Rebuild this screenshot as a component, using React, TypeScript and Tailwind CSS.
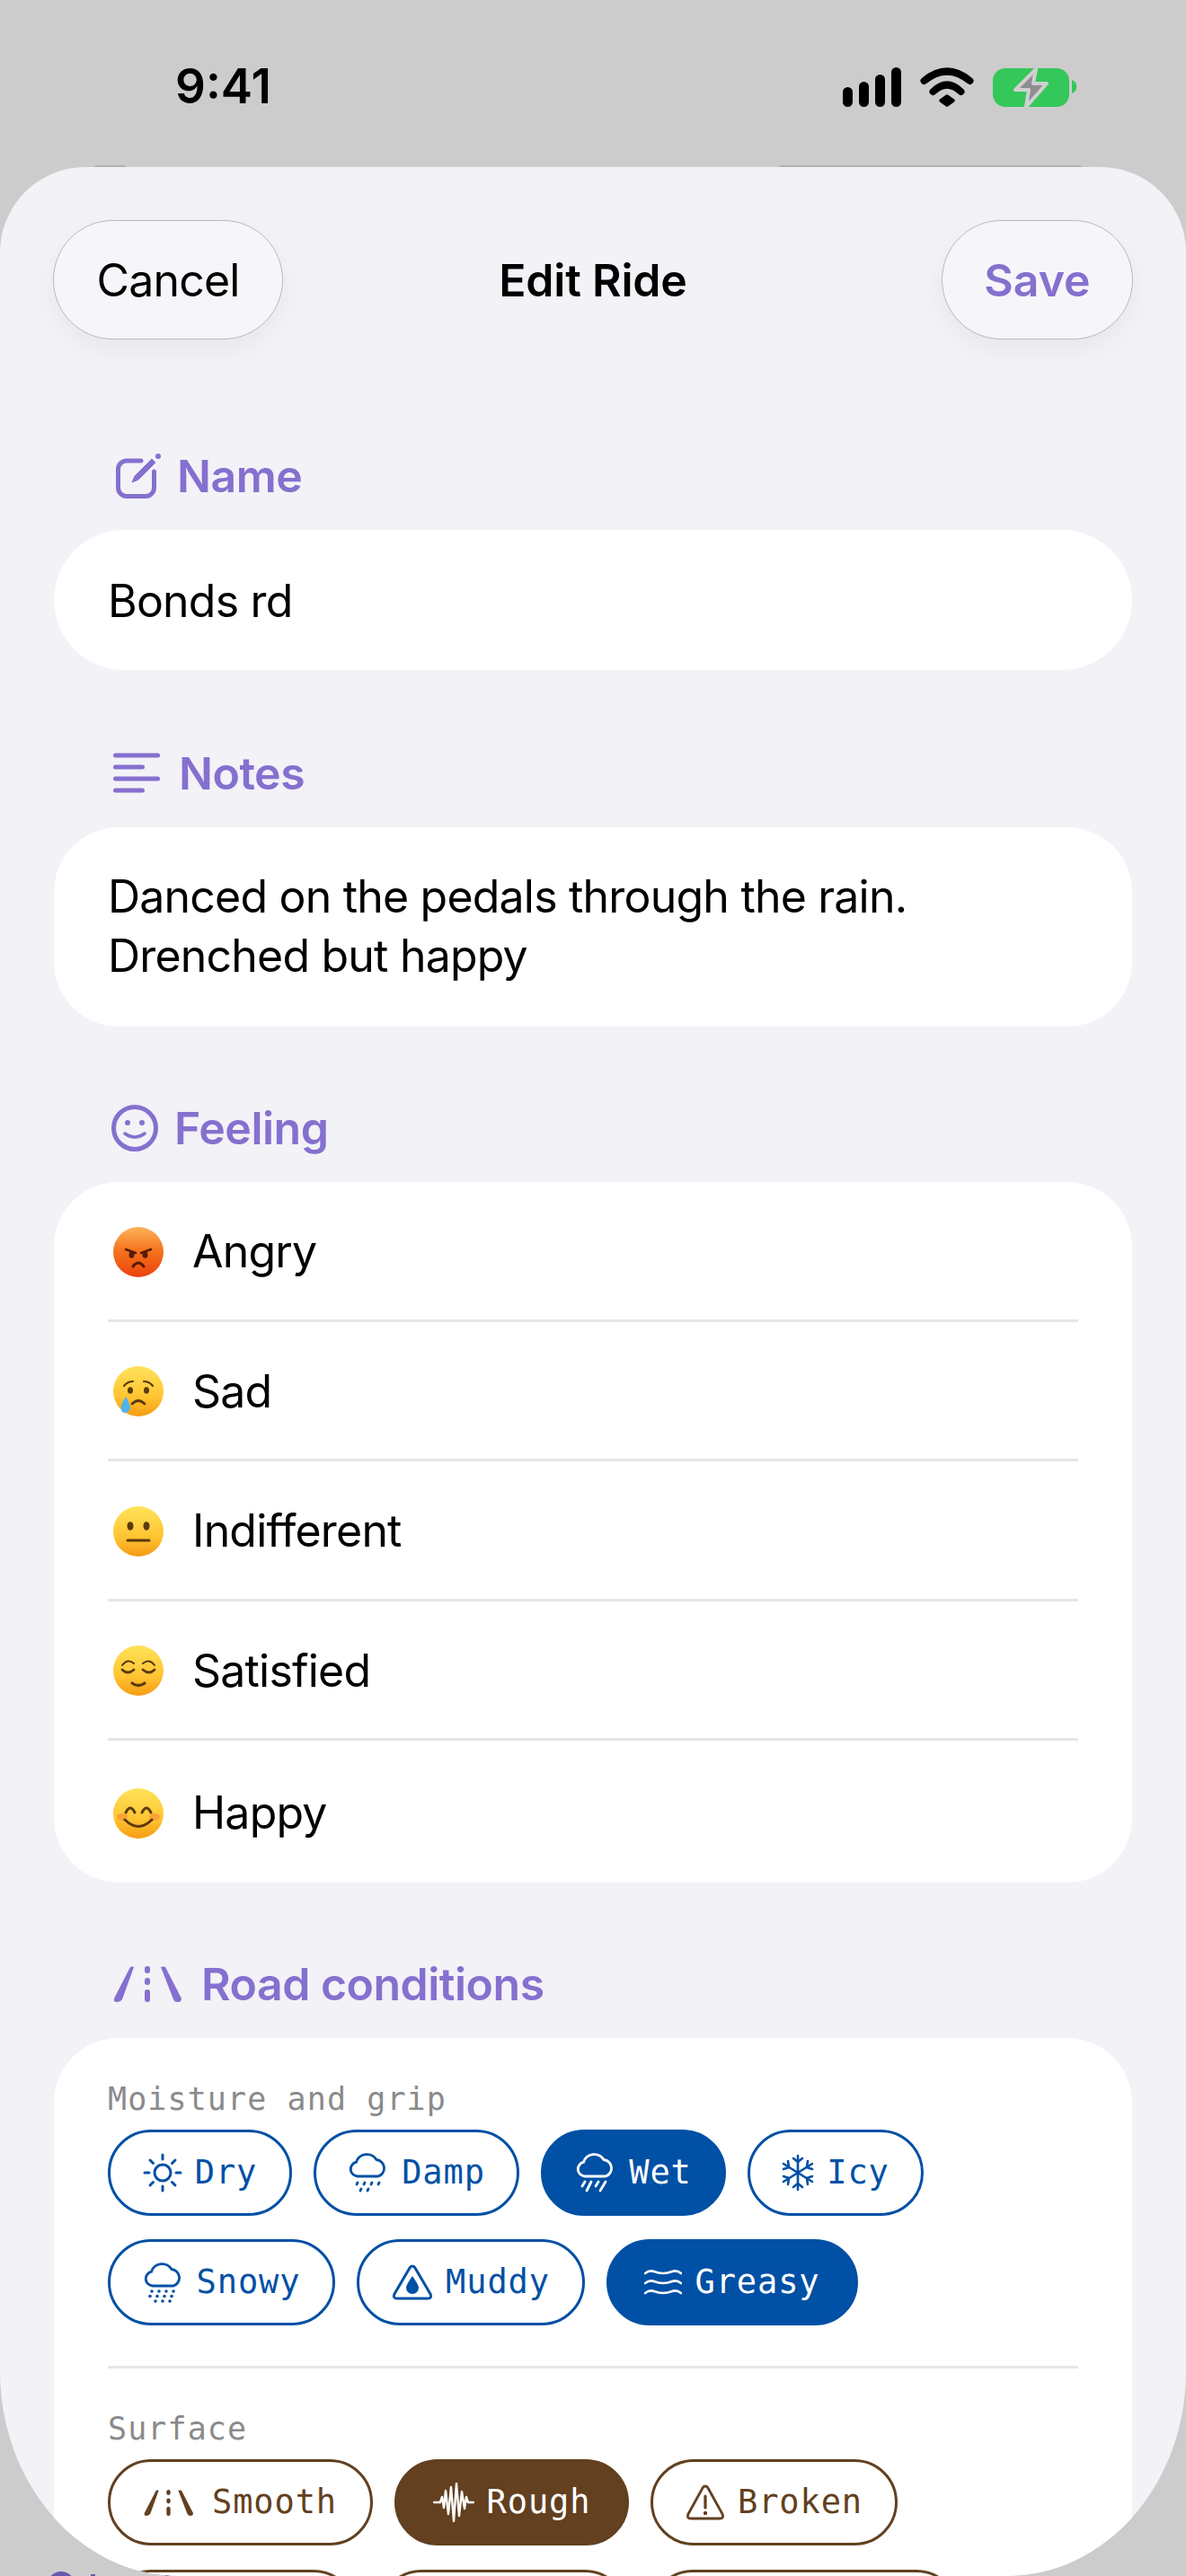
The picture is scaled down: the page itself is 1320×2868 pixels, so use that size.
import type { ReactNode } from 'react';

const ui = "font-['Inter','Liberation_Sans',sans-serif]";
const mono = "font-['DejaVu_Sans_Mono',monospace]";

const Signal = () => (
  <svg width="65" height="44" viewBox="0 0 65 44" fill="#000">
    <rect x="0" y="22" width="11" height="22" rx="5.5" />
    <rect x="18" y="16" width="11" height="28" rx="5.5" />
    <rect x="36" y="8" width="11" height="36" rx="5.5" />
    <rect x="54" y="0" width="11" height="44" rx="5.5" />
  </svg>
);

const Wifi = () => (
  <svg width="60" height="45" viewBox="0 0 60 45" fill="none" stroke="#000" strokeLinecap="round">
    <path d="M4.5 15 Q30 -6 55.5 15" strokeWidth="8" />
    <path d="M14.5 27 Q30 12 45.5 27" strokeWidth="8" />
    <path d="M23 37 L30 32 L37 37 L30 42 Z" fill="#000" strokeWidth="3.5" strokeLinejoin="round" />
  </svg>
);

const Battery = () => (
  <svg width="94" height="45" viewBox="0 0 94 45">
    <rect x="0" y="1" width="85" height="43" rx="14" fill="#34c759" />
    <path d="M88 14 a8 8 0 0 1 0 15 Z" fill="#34c759" />
    <path
      d="M48 2 L25 25 L40 25 L37 44 L60 18 L45 18 Z"
      fill="#8e8e93"
      stroke="#d0d0d0"
      strokeWidth="4"
      strokeLinejoin="round"
    />
  </svg>
);

const EditIcon = () => (
  <svg className="ml-[69px] mr-[18px] h-[50px] w-[50px]" viewBox="0 0 50 50" fill="none" stroke="currentColor">
    <path
      d="M28 8 H12 A9.500 9.500 0 0 0 2.500 17.500 V38 A9.500 9.500 0 0 0 12 47.500 H33 A9.500 9.500 0 0 0 42.500 38 V20"
      strokeWidth="5"
      strokeLinecap="round"
    />
    <path d="M18 32 L21 25 L40 6 L44 10 L25 29 Z" fill="currentColor" strokeWidth="1" />
    <circle cx="47" cy="3" r="3" fill="currentColor" stroke="none" />
  </svg>
);

const LinesIcon = () => (
  <svg className="ml-[66px] mr-[21px] h-[46px] w-[52px]" viewBox="0 0 52 46" stroke="currentColor" strokeWidth="5" strokeLinecap="round">
    <path d="M2.500 3 H49.500 M2.500 16 H32.500 M2.500 29 H49.500 M2.500 42 H32.500" />
  </svg>
);

const SmileIcon = () => (
  <svg className="ml-[64px] mr-[18px] h-[52px] w-[52px]" viewBox="0 0 52 52" fill="none" stroke="currentColor">
    <circle cx="26" cy="26" r="23.500" strokeWidth="5" />
    <circle cx="18" cy="20" r="3" fill="currentColor" stroke="none" />
    <circle cx="34" cy="20" r="3" fill="currentColor" stroke="none" />
    <path d="M15 32 Q26 40 37 32" strokeWidth="3.500" strokeLinecap="round" />
  </svg>
);

const RoadIcon = ({ className }: { className: string }) => (
  <svg className={className} viewBox="0 0 76 40" fill="currentColor">
    <path d="M19 1 Q21 0 23 1 L10 37 Q8 40 3 40 Q0 39 1 36 Z" />
    <rect x="35" y="0" width="6" height="8" rx="3" />
    <rect x="35" y="13" width="6" height="8" rx="3" />
    <rect x="35" y="26" width="6" height="14" rx="3" />
    <path d="M53 1 Q56 0 58 1 L76 36 Q76 40 72 40 Q68 40 67 37 Z" />
  </svg>
);

const cloud = 'M11 27 a8 8 0 0 1 -1.500 -15.800 A12.500 12.500 0 0 1 32 8.500 A9.500 9.500 0 0 1 34 27 Z';

const Sun = () => (
  <svg className="h-[44px] w-[44px]" viewBox="0 0 44 44" fill="none" stroke="currentColor" strokeWidth="3" strokeLinecap="round">
    <circle cx="22" cy="22" r="9" />
    <path d="M22 2 V7 M22 37 V42 M2 22 H7 M37 22 H42 M8 8 L11.500 11.500 M32.500 32.500 L36 36 M36 8 L32.500 11.500 M11.500 32.500 L8 36" />
  </svg>
);

const CloudRain = ({ drizzle }: { drizzle?: boolean }) => (
  <svg className="h-[46px] w-[46px]" viewBox="0 0 46 46" fill="none" stroke="currentColor" strokeWidth="2.800" strokeLinecap="round">
    <path d={cloud} />
    {drizzle ? (
      <path d="M11 34 L10 36 M19 34 L18 36 M27 34 L26 36 M35 34 L34 36 M15 41 L14 43 M23 41 L22 43" />
    ) : (
      <path d="M11 33 L8 38 M18 33 L13 43 M26 33 L23 38 M34 33 L28 43" />
    )}
  </svg>
);

const CloudSnow = () => (
  <svg className="h-[46px] w-[46px]" viewBox="0 0 46 46" fill="none" stroke="currentColor" strokeWidth="2.800" strokeLinecap="round">
    <path d={cloud} />
    <g fill="currentColor" stroke="none">
      {[10, 18, 26, 34].map((x) => (
        <circle key={x} cx={x} cy="33" r="1.800" />
      ))}
      {[8, 16, 24, 32].map((x) => (
        <circle key={x} cx={x} cy="38.500" r="1.800" />
      ))}
      {[14, 22, 30].map((x) => (
        <circle key={x} cx={x} cy="44" r="1.800" />
      ))}
    </g>
  </svg>
);

const Flake = () => (
  <svg className="h-[40px] w-[36px]" viewBox="0 0 36 40" fill="none" stroke="currentColor" strokeWidth="2.600" strokeLinecap="round" strokeLinejoin="round">
    <path d="M18 1 V39 M2 10 L34 30 M34 10 L2 30" />
    <path d="M13 4 L18 8 L23 4 M13 36 L18 32 L23 36 M2 16 L8 14 L7 7 M34 16 L28 14 L29 7 M2 24 L8 26 L7 33 M34 24 L28 26 L29 33" />
  </svg>
);

const Muddy = () => (
  <svg className="h-[42px] w-[46px]" viewBox="0 0 46 42" fill="none" stroke="currentColor" strokeWidth="3" strokeLinejoin="round">
    <path d="M23 3 Q25 3 26 5 L43 34 Q45 39 40 39 H6 Q1 39 3 34 L20 5 Q21 3 23 3 Z" />
    <path d="M23 14 Q30 24 30 27 A7 7 0 0 1 16 27 Q16 24 23 14 Z" fill="currentColor" stroke="none" />
  </svg>
);

const Waves = () => (
  <svg className="h-[32px] w-[42px]" viewBox="0 0 42 32" fill="none" stroke="currentColor" strokeWidth="2.600" strokeLinecap="round">
    <path d="M1 6 Q6 2 11 4 T21 6 T31 4 T41 6 M1 17 Q6 13 11 15 T21 17 T31 15 T41 17 M1 28 Q6 24 11 26 T21 28 T31 26 T41 28" />
  </svg>
);

const Waveform = () => (
  <svg className="h-[44px] w-[46px]" viewBox="0 0 46 44" fill="none" stroke="currentColor" strokeWidth="2.400" strokeLinecap="round" strokeLinejoin="round">
    <path d="M1 22 H8 L10 16 L12 28 L14 9 L17 35 L20 5 L23 43 L26 1 L29 37 L32 10 L35 29 L37 16 L39 22 H45" />
  </svg>
);

const Warning = () => (
  <svg className="h-[40px] w-[44px]" viewBox="0 0 44 40" fill="none" stroke="currentColor" strokeWidth="2.800" strokeLinejoin="round">
    <path d="M22 2 Q24 2 25 4 L41 33 Q43 38 38 38 H6 Q1 38 3 33 L19 4 Q20 2 22 2 Z" />
    <path d="M22 13 V26" strokeWidth="3.200" strokeLinecap="round" />
    <circle cx="22" cy="32" r="2.200" fill="currentColor" stroke="none" />
  </svg>
);

const Emoji = ({ kind }: { kind: 'angry' | 'sad' | 'neutral' | 'relieved' | 'happy' }) => {
  const fill = kind === 'angry' ? 'url(#faceRed)' : 'url(#faceYellow)';
  const ink = kind === 'angry' ? '#5a1a06' : '#5b3a0c';
  return (
    <svg className="mr-[32px] ml-[6px] h-[56px] w-[56px] shrink-0" viewBox="0 0 56 56" fill="none">
      <defs>
        <linearGradient id="faceRed" x1="0" y1="0" x2="0" y2="1">
          <stop offset="0" stopColor="#fdb45b" />
          <stop offset="0.45" stopColor="#f5761f" />
          <stop offset="1" stopColor="#ec420c" />
        </linearGradient>
        <linearGradient id="faceYellow" x1="0" y1="0" x2="0" y2="1">
          <stop offset="0" stopColor="#ffe25a" />
          <stop offset="0.6" stopColor="#ffc532" />
          <stop offset="1" stopColor="#f59b14" />
        </linearGradient>
      </defs>
      <circle cx="28" cy="28" r="28" fill={fill} />
      {kind === 'angry' && (
        <g stroke={ink} strokeLinecap="round">
          <path d="M14 25 L25 29 M42 25 L31 29" strokeWidth="2.500" />
          <ellipse cx="20.500" cy="31" rx="3" ry="3.800" fill={ink} stroke="none" />
          <ellipse cx="35.500" cy="31" rx="3" ry="3.800" fill={ink} stroke="none" />
          <path d="M22 44 Q28 36 34 44" strokeWidth="3" />
        </g>
      )}
      {kind === 'sad' && (
        <g stroke={ink} strokeLinecap="round">
          <path d="M12 22 Q16 17 22 17 M44 22 Q40 17 34 17" strokeWidth="2.200" />
          <ellipse cx="19" cy="27" rx="3" ry="3.800" fill={ink} stroke="none" />
          <ellipse cx="37" cy="27" rx="3" ry="3.800" fill={ink} stroke="none" />
          <path d="M21 42 Q28 35 35 42" strokeWidth="2.800" />
          <path d="M14 34 Q6 46 10 51 Q16 54 19 47 Q19 42 14 34 Z" fill="#4fb4ee" stroke="none" />
        </g>
      )}
      {kind === 'neutral' && (
        <g stroke={ink} strokeLinecap="round">
          <ellipse cx="19" cy="22" rx="3.500" ry="4.800" fill={ink} stroke="none" />
          <ellipse cx="37" cy="22" rx="3.500" ry="4.800" fill={ink} stroke="none" />
          <path d="M16 38 H40" strokeWidth="3" />
        </g>
      )}
      {kind === 'relieved' && (
        <g stroke={ink} strokeLinecap="round">
          <path d="M10 22 Q16 14 23 20 M33 20 Q40 14 46 22" strokeWidth="2" />
          <path d="M10 27 Q16 33 23 27 M33 27 Q40 33 46 27" strokeWidth="2.800" />
          <path d="M21 42 Q28 47 35 42" strokeWidth="3.200" />
        </g>
      )}
      {kind === 'happy' && (
        <g stroke={ink} strokeLinecap="round">
          <ellipse cx="10" cy="32" rx="6" ry="4" fill="#f58a3c" stroke="none" opacity="0.6" />
          <ellipse cx="46" cy="32" rx="6" ry="4" fill="#f58a3c" stroke="none" opacity="0.6" />
          <path d="M14 27 Q19 17 24 27 M32 27 Q37 17 42 27" strokeWidth="3" />
          <path d="M13 35 Q28 50 43 35" strokeWidth="3" />
        </g>
      )}
    </svg>
  );
};

const Section = ({
  icon,
  title,
  className,
  children,
}: {
  icon: ReactNode;
  title: string;
  className: string;
  children: ReactNode;
}) => (
  <section className={className}>
    <h2 className="mb-[30px] flex h-[60px] items-center text-[50px] font-semibold tracking-[-0.5px] text-[#8570cf]">
      {icon}
      {title}
    </h2>
    {children}
  </section>
);

const Chip = ({
  icon,
  label,
  on,
  color,
  width,
}: {
  icon: ReactNode;
  label: string;
  on?: boolean;
  color: 'blue' | 'brown';
  width: string;
}) => {
  const tone =
    color === 'blue'
      ? on
        ? 'border-[#0050a5] bg-[#0050a5] text-white'
        : 'border-[#0050a5] text-[#0050a5]'
      : on
        ? 'border-[#624020] bg-[#624020] text-white'
        : 'border-[#624020] text-[#624020]';
  return (
    <div className={`flex h-[96px] items-center justify-center gap-[14px] rounded-full border-[3px] ${width} ${tone}`}>
      {icon}
      <span className="text-[37px] tracking-[0.9px]">{label}</span>
    </div>
  );
};

const feelings = [
  { kind: 'angry', label: 'Angry' },
  { kind: 'sad', label: 'Sad' },
  { kind: 'neutral', label: 'Indifferent' },
  { kind: 'relieved', label: 'Satisfied' },
  { kind: 'happy', label: 'Happy' },
] as const;

export default function App() {
  return (
    <div className={`relative flex h-[2868px] w-[1320px] flex-col overflow-hidden bg-[#cccccc] ${ui}`}>
      <header className="flex h-[186px] shrink-0 items-center justify-between pt-[8px] pr-[121px] pl-[195px]">
        <span className="text-[53px] font-semibold text-black">9:41</span>
        <div className="flex items-center gap-[21px]">
          <Signal />
          <Wifi />
          <Battery />
        </div>
      </header>

      <span className="absolute top-[184px] left-[867px] h-[6px] w-[337px] rounded-full bg-[#b0b0b0]" />
      <span className="absolute top-[184px] left-[105px] h-[6px] w-[35px] rounded-full bg-[#b0b0b0]" />
      <span className="absolute top-[2863px] left-[52px] h-[32px] w-[32px] rounded-full bg-[#6b58ab]" />
      <span className="absolute top-[2866px] left-[101px] h-[2px] w-[5px] bg-[#6b58ab]" />
      <span className="absolute top-[2866px] left-[184px] h-[2px] w-[5px] bg-[#6b58ab]" />

      <main className="relative flex-1 overflow-hidden rounded-t-[95px] rounded-b-[200px_228px] bg-[#f2f2f7] px-[60px] pt-[59px]">
        <div className="-mx-px grid h-[133px] grid-cols-[1fr_auto_1fr] items-center text-[50px]">
          <button className="h-[133px] w-[256px] rounded-full border border-[#b8b8bd] bg-[#f6f6fa] pt-[2px] tracking-[-0.8px] text-black shadow-[0_12px_30px_rgba(0,0,0,0.05)]">
            Cancel
          </button>
          <h1 className="pt-[2px] font-semibold tracking-[-0.2px] text-black">Edit Ride</h1>
          <button className="h-[133px] w-[213px] justify-self-end rounded-full border border-[#b8b8bd] bg-[#f6f6fa] pt-[2px] font-semibold text-[#8570cf] shadow-[0_12px_30px_rgba(0,0,0,0.05)]">
            Save
          </button>
        </div>

        <Section icon={<EditIcon />} title="Name" className="mt-[122px]">
          <div className="flex h-[156px] items-center rounded-full bg-white px-[60px] pt-[2px] text-[50px] tracking-[-0.8px] text-black">
            Bonds rd
          </div>
        </Section>

        <Section icon={<LinesIcon />} title="Notes" className="mt-[85px]">
          <div className="flex h-[222px] items-center rounded-[72px] bg-white px-[60px] pb-[3px] text-[50px] leading-[66px] tracking-[-0.8px] text-black">
            <p>
              Danced on the pedals through the rain.
              <br />
              Drenched but happy
            </p>
          </div>
        </Section>

        <Section icon={<SmileIcon />} title="Feeling" className="mt-[83px]">
          <div className="rounded-[72px] bg-white px-[60px]">
            {feelings.map((f, i) => (
              <div
                key={f.kind}
                className={`flex items-center pt-[3px] text-[50px] tracking-[-0.8px] text-black ${
                  i < 4 ? 'h-[155.500px] border-b-[3px] border-[#e5e5ea]' : 'h-[158px]'
                }`}
              >
                <Emoji kind={f.kind} />
                {f.label}
              </div>
            ))}
          </div>
        </Section>

        <Section icon={<RoadIcon className="mr-[22px] ml-[66px] h-[40px] w-[76px]" />} title="Road conditions" className="mt-[83px]">
          <div className={`rounded-t-[72px] bg-white px-[60px] pt-[48px] ${mono}`}>
            <p className="text-[35px] leading-[40px] tracking-[1.1px] text-[#8a8a8a]">Moisture and grip</p>
            <div className="mt-[14px] flex flex-wrap gap-x-[24px] gap-y-[26px] pb-[45px]">
              <Chip color="blue" label="Dry" width="w-[205px]" icon={<Sun />} />
              <Chip color="blue" label="Damp" width="w-[229px]" icon={<CloudRain drizzle />} />
              <Chip color="blue" label="Wet" width="w-[206px]" on icon={<CloudRain />} />
              <Chip color="blue" label="Icy" width="w-[196px]" icon={<Flake />} />
              <Chip color="blue" label="Snowy" width="w-[253px]" icon={<CloudSnow />} />
              <Chip color="blue" label="Muddy" width="w-[254px]" icon={<Muddy />} />
              <Chip color="blue" label="Greasy" width="w-[280px]" on icon={<Waves />} />
            </div>
            <div className="border-t-[3px] border-[#e5e5ea] pt-[47px]">
              <p className="text-[35px] leading-[40px] tracking-[1.1px] text-[#8a8a8a]">Surface</p>
              <div className="mt-[14px] flex flex-wrap gap-x-[24px] gap-y-[27px]">
                <Chip color="brown" label="Smooth" width="w-[295px]" icon={<RoadIcon className="mr-[7px] h-[29px] w-[55px]" />} />
                <Chip color="brown" label="Rough" width="w-[261px]" on icon={<Waveform />} />
                <Chip color="brown" label="Broken" width="w-[275px]" icon={<Warning />} />
                <div className="h-[96px] w-[277px] rounded-full border-[3px] border-[#624020]" />
                <div className="h-[96px] w-[278px] rounded-full border-[3px] border-[#624020]" />
                <div className="h-[96px] w-[345px] rounded-full border-[3px] border-[#624020]" />
              </div>
            </div>
          </div>
        </Section>
      </main>
    </div>
  );
}
